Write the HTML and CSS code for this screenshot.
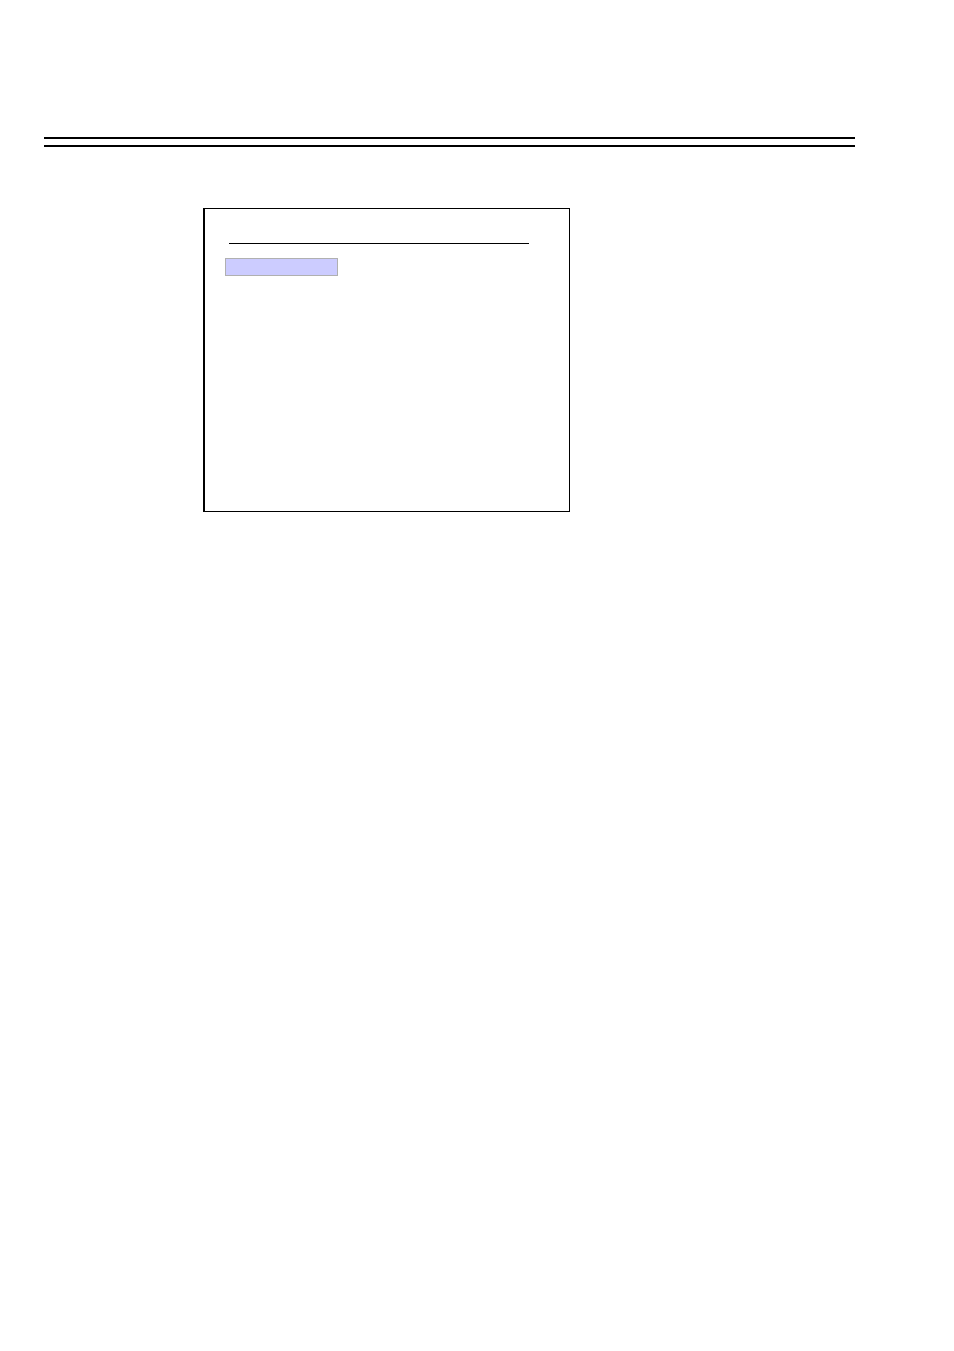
FILE: index.html
```html
<!DOCTYPE html>
<html lang="en">
<head>
<meta charset="utf-8">
<meta name="viewport" content="width=device-width, initial-scale=1">
<title>Menu screen</title>
<link rel="stylesheet" href="styles.css">
</head>
<body>
<div class="page">
  <header class="page-rule"></header>
  <main class="content">
    <section class="screen">
      <div class="screen-title"></div>
      <div class="menu-highlight"></div>
    </section>
  </main>
</div>
</body>
</html>
```

FILE: styles.css
```css
* {
  box-sizing: border-box;
}

body {
  margin: 0;
  background: #fff;
  color: #000;
  font-family: "Liberation Sans", Arial, sans-serif;
}

.page {
  min-height: 100vh;
  padding: 137px 99px 40px 44px;
}

/* Double rule across the top of the page */
.page-rule {
  height: 10px;
  border-top: 2px solid #000;
  border-bottom: 2px solid #000;
}

.content {
  padding: 61px 0 0 159px;
}

.screen {
  max-width: 367px;
  min-height: 304px;
  padding: 0 20px;
  border: 1px solid #000;
  border-left-width: 2px;
}

.screen-title {
  height: 35px;
  margin: 0 20px 14px 4px;
  border-bottom: 1px solid #000;
}

.menu-highlight {
  max-width: 113px;
  height: 18px;
  border: 1px solid #b0b0b0;
  background: #ccf;
}
```
